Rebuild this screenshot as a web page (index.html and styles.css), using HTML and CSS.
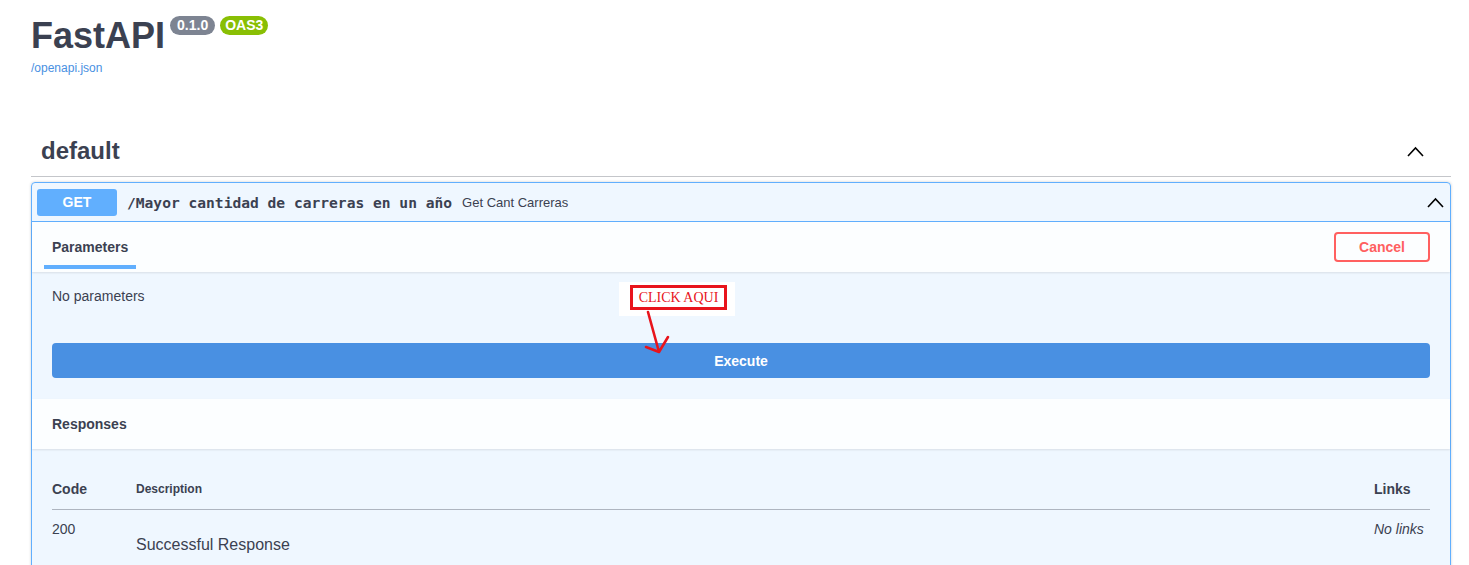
FILE: index.html
```html
<!DOCTYPE html>
<html lang="en">
<head>
<meta charset="utf-8">
<title>FastAPI - Swagger UI</title>
<link rel="stylesheet" href="styles.css">
</head>
<body>
<div class="wrapper">
  <div class="info">
    <div class="title-row">
      <h2 class="title">FastAPI</h2>
      <span class="badge badge-version">0.1.0</span>
      <span class="badge badge-oas">OAS3</span>
    </div>
    <a class="spec-link" href="#">/openapi.json</a>
  </div>

  <div class="tag">
    <h3 class="tag-head">
      <span>default</span>
      <svg class="chevron" width="17" height="11" viewBox="0 0 17 11"><polyline points="1,10 8.5,2 16,10" fill="none" stroke="#000" stroke-width="1.6"/></svg>
    </h3>

    <div class="opblock">
      <div class="summary">
        <span class="method">GET</span>
        <span class="path">/Mayor cantidad de carreras en un año</span>
        <span class="desc">Get Cant Carreras</span>
        <svg class="chevron summary-chevron" width="17" height="11" viewBox="0 0 17 11"><polyline points="1,10 8.5,2 16,10" fill="none" stroke="#000" stroke-width="1.6"/></svg>
      </div>

      <div class="section-head">
        <div class="tab">Parameters</div>
        <button class="cancel">Cancel</button>
      </div>

      <div class="params">
        <p class="no-params">No parameters</p>
        <div class="note"><span class="note-box">CLICK AQUI</span></div>
        <svg class="note-arrow" width="45" height="50" viewBox="0 0 45 50"><path d="M16 4 L27 44 M14 39 L27 44 L36 29" fill="none" stroke="#e8141c" stroke-width="2.6" stroke-linecap="round" stroke-linejoin="round"/></svg>
        <button class="execute">Execute</button>
      </div>

      <div class="section-head">
        <h4 class="section-title">Responses</h4>
      </div>

      <div class="responses">
        <table class="resp-table">
          <thead>
            <tr>
              <th class="col-code">Code</th>
              <th class="col-desc">Description</th>
              <th class="col-links">Links</th>
            </tr>
          </thead>
          <tbody>
            <tr>
              <td class="col-code">200</td>
              <td class="col-desc"><p class="resp-desc">Successful Response</p></td>
              <td class="col-links"><i>No links</i></td>
            </tr>
          </tbody>
        </table>
      </div>
    </div>
  </div>
</div>
</body>
</html>
```
FILE: styles.css
```css
* { box-sizing: border-box; }

body {
  margin: 0;
  font-family: "Liberation Sans", Arial, sans-serif;
  color: #3b4151;
  background: #fff;
}

.wrapper {
  padding: 0 18px 0 31px;
}

.info {
  padding-top: 16px;
}

.title-row {
  display: flex;
  align-items: flex-start;
}

.title {
  margin: 0;
  font-size: 36px;
  line-height: 40px;
  font-weight: 700;
  color: #3b4151;
}

.badge {
  display: inline-block;
  height: 19px;
  line-height: 19px;
  border-radius: 57px;
  color: #fff;
  font-size: 14px;
  font-weight: 700;
  margin-left: 5px;
}

.badge-version {
  background: #7d8492;
  padding: 0 7px;
}

.badge-oas {
  background: #89bf04;
  padding: 0 5px;
}

.spec-link {
  display: block;
  margin-top: 5px;
  font-size: 12px;
  line-height: 14px;
  color: #4990e2;
  text-decoration: none;
}

.tag {
  margin-top: 51px;
}

.tag-head {
  display: flex;
  align-items: center;
  justify-content: space-between;
  margin: 0;
  padding: 10px 27px 10px 10px;
  font-size: 24px;
  line-height: 30px;
  font-weight: 700;
  border-bottom: 1px solid rgba(59, 65, 81, 0.3);
}

.opblock {
  margin-top: 5px;
  border: 1px solid #61affe;
  border-radius: 4px;
  background: rgba(97, 175, 254, 0.1);
  box-shadow: 0 0 3px rgba(0, 0, 0, 0.19);
}

.summary {
  display: flex;
  align-items: center;
  height: 39px;
  padding: 0 6px 0 5px;
  border-bottom: 1px solid #61affe;
}

.method {
  width: 80px;
  height: 27px;
  line-height: 27px;
  text-align: center;
  background: #61affe;
  color: #fff;
  font-size: 14px;
  font-weight: 700;
  border-radius: 3px;
}

.path {
  margin-left: 10px;
  font-family: "DejaVu Sans Mono", "Liberation Mono", monospace;
  font-size: 14.6px;
  font-weight: 700;
  color: #3b4151;
}

.desc {
  margin-left: 10px;
  font-size: 13px;
  color: #3b4151;
  flex: 1;
}

.section-head {
  position: relative;
  display: flex;
  align-items: center;
  justify-content: space-between;
  height: 50px;
  padding: 0 20px;
  background: rgba(255, 255, 255, 0.8);
  box-shadow: 0 1px 2px rgba(0, 0, 0, 0.1);
}

.tab {
  position: relative;
  align-self: stretch;
  display: flex;
  align-items: center;
  margin-left: -8px;
  padding: 0 8px;
  font-size: 14px;
  font-weight: 700;
}

.tab::after {
  content: "";
  position: absolute;
  left: 0;
  right: 0;
  bottom: 3px;
  height: 4px;
  background: #61affe;
}

.cancel {
  width: 96px;
  height: 30px;
  margin-right: 0;
  border: 2px solid #ff6060;
  border-radius: 4px;
  background: transparent;
  color: #ff6060;
  font-family: "Liberation Sans", Arial, sans-serif;
  font-size: 14px;
  font-weight: 700;
}

.params {
  position: relative;
  padding: 16px 20px 21px;
}

.no-params {
  margin: 0;
  font-size: 14px;
  line-height: 16px;
}

.execute {
  display: block;
  width: 100%;
  height: 35px;
  margin-top: 39px;
  border: 0;
  border-radius: 4px;
  background: #4990e2;
  color: #fff;
  font-family: "Liberation Sans", Arial, sans-serif;
  font-size: 14px;
  font-weight: 700;
}

.note {
  position: absolute;
  left: 587px;
  top: 10px;
  width: 116px;
  height: 34px;
  padding: 3px 0 0 11px;
  background: #fff;
  z-index: 2;
}

.note-box {
  display: inline-block;
  width: 97px;
  height: 25px;
  border: 3px solid #e8141c;
  font-family: "Liberation Serif", "Times New Roman", serif;
  font-size: 14px;
  line-height: 19px;
  text-align: center;
  color: #e8141c;
}

.note-arrow {
  position: absolute;
  left: 600px;
  top: 36px;
  z-index: 3;
}

.section-title {
  margin: 0;
  font-size: 14px;
  font-weight: 700;
}

.responses {
  padding: 20px 20px 40px;
}

.resp-table {
  width: 100%;
  border-collapse: collapse;
}

.resp-table th {
  padding: 10px 0 10px;
  line-height: 20px;
  text-align: left;
  font-size: 14px;
  font-weight: 700;
  border-bottom: 1px solid rgba(59, 65, 81, 0.2);
}

.resp-table th.col-desc {
  font-size: 12px;
}

.resp-table td {
  padding: 10px 0 0;
  line-height: 18px;
  vertical-align: top;
  font-size: 14px;
}

.col-code {
  width: 84px;
}

.col-links {
  width: 56px;
}

.resp-desc {
  margin: 16px 0 0;
  font-size: 16px;
  line-height: 18px;
}
```
